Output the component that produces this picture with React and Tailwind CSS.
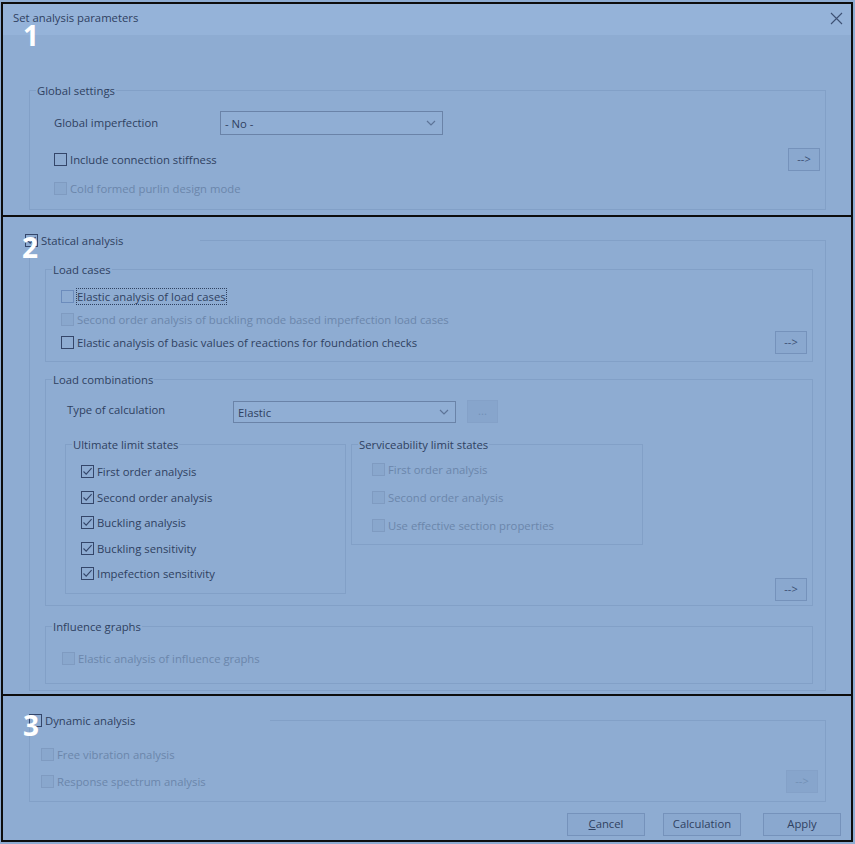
import React from 'react';

const T = 'text-[#2f4161]';
const D = 'text-[#6b86ab]';

function Box({ checked, disabled, hover }) {
  const cls = disabled
    ? 'border-[#7f9bc1] bg-[#89a7cd]'
    : hover
    ? 'border-[#6c8cbc]'
    : 'border-[#34466a]';
  return (
    <span className={`flex h-[13px] w-[13px] shrink-0 items-center justify-center border ${cls}`}>
      {checked && (
        <svg width="11" height="11" viewBox="0 0 11 11">
          <path d="M1.5 5.5 L4.2 8.2 L9.6 2.2" stroke="#34466a" strokeWidth="1.1" fill="none" />
        </svg>
      )}
    </span>
  );
}

function Check({ label, checked, disabled, focus, hover, className = '' }) {
  return (
    <div className={`flex items-center gap-[3px] ${className}`}>
      <Box checked={checked} disabled={disabled} hover={hover} />
      <span
        className={`leading-[15px] ${disabled ? D : T} ${
          focus ? 'outline outline-1 outline-dotted outline-[#2f4161]' : ''
        }`}
      >
        {label}
      </span>
    </div>
  );
}

function Group({ title, className = '', inner = '', children }) {
  return (
    <fieldset className={`border border-[#82a0c7] ${className}`}>
      <legend className={`ml-[6px] px-[1px] leading-[15px] ${T}`}>{title}</legend>
      <div className={inner}>{children}</div>
    </fieldset>
  );
}

function Arrow({ disabled }) {
  return (
    <div
      className={`flex h-[23px] w-[32px] shrink-0 items-center justify-center border text-[11px] ${
        disabled
          ? 'border-[#84a1c8] bg-[#87a5cc] text-[#7290b6]'
          : 'border-[#7592bb] bg-[#8aa8cf] text-[#3b4f74]'
      }`}
    >
      {'-->'}
    </div>
  );
}

function Select({ value, w, h }) {
  return (
    <div
      className={`flex ${w} ${h} items-center justify-between border border-[#6a83a8] bg-[#90aed4] pl-[4px] pr-[6px]`}
    >
      <span className={`${T} leading-[15px]`}>{value}</span>
      <svg width="10" height="6" viewBox="0 0 10 6">
        <path d="M1 1 L5 5 L9 1" stroke="#5d7498" strokeWidth="1.2" fill="none" />
      </svg>
    </div>
  );
}

function Num({ n, className }) {
  return (
    <span
      className={`absolute text-[28px] font-bold leading-none text-white ${className}`}
      style={{ fontFamily: '"Open Sans", sans-serif' }}
    >
      {n}
    </span>
  );
}

function FootBtn({ children }) {
  return (
    <div className={`flex h-[23px] w-[78px] items-center justify-center border border-[#7592bb] bg-[#8aa8cf] ${T}`}>
      {children}
    </div>
  );
}

export default function App() {
  return (
    <div
      className="h-[844px] w-[855px] bg-[#8eacd2] pt-[2px] pl-[1px] text-[11.3px]"
      style={{ fontFamily: '"Open Sans", "Noto Sans", sans-serif' }}
    >
      {/* section 1 */}
      <div className="relative flex h-[215px] w-[852px] flex-col border-2 border-[#0d0d0d]">
        <div className="flex h-[31px] shrink-0 items-start justify-between bg-[#95b3d9] pl-[10px] pr-[8px] pt-[6px]">
          <span className={`leading-[15px] ${T}`}>Set analysis parameters</span>
          <svg width="13" height="13" viewBox="0 0 13 13" className="mt-[2px]">
            <path d="M1 1 L12 12 M12 1 L1 12" stroke="#3d5073" strokeWidth="1.1" />
          </svg>
        </div>
        <Group
          title="Global settings"
          className="ml-[26px] mt-[48px] w-[797px]"
          inner="pb-[13px] pl-[24px] pr-[5px] pt-[13px]"
        >
          <div className="flex h-[24px] items-center">
            <span className={`w-[166px] ${T}`}>Global imperfection</span>
            <Select value="- No -" w="w-[223px]" h="h-[24px]" />
          </div>
          <div className="mt-[13px] flex h-[23px] items-center justify-between">
            <Check label="Include connection stiffness" />
            <Arrow />
          </div>
          <Check label="Cold formed purlin design mode" disabled className="mt-[10px] h-[15px]" />
        </Group>
        <Num n="1" className="left-[20px] top-[17px]" />
      </div>

      {/* section 2 */}
      <div className="relative flex h-[479px] w-[852px] flex-col border-x-2 border-b-2 border-[#0d0d0d]">
        <fieldset className="ml-[26px] mt-[16px] w-[797px] border border-[#82a0c7]">
          <legend className="-ml-[5px] flex h-[15px] w-[175px] items-center gap-[3px]">
            <Box checked />
            <span className={`leading-[15px] ${T}`}>Statical analysis</span>
          </legend>
          <div className="pb-[6px] pl-[15px]">
            <Group
              title="Load cases"
              className="mt-[14px] w-[768px]"
              inner="pb-[7px] pl-[15px] pr-[5px] pt-[8px]"
            >
              <div className="flex h-[23px] items-center">
                <Check label="Elastic analysis of load cases" focus hover />
              </div>
              <div className="flex h-[23px] items-center">
                <Check label="Second order analysis of buckling mode based imperfection load cases" disabled />
              </div>
              <div className="flex h-[23px] items-center justify-between">
                <Check label="Elastic analysis of basic values of reactions for foundation checks" />
                <Arrow />
              </div>
            </Group>

            <Group
              title="Load combinations"
              className="mt-[10px] w-[768px]"
              inner="pb-[11px] pl-[19px] pr-[5px] pt-[13px]"
            >
              <div className="flex h-[23px] items-start">
                <span className={`mt-[2px] w-[168px] pl-[2px] leading-[15px] ${T}`}>Type of calculation</span>
                <div className="mt-[1px]">
                  <Select value="Elastic" w="w-[223px]" h="h-[22px]" />
                </div>
                <div className="ml-[11px] flex h-[23px] w-[31px] items-center justify-center border border-[#84a1c8] bg-[#87a5cc] text-[#7290b6]">
                  ...
                </div>
              </div>
              <div className="mt-[14px] flex items-start">
                <Group title="Ultimate limit states" className="w-[281px]" inner="pb-[6px] pl-[15px] pt-[7px]">
                  <Check label="First order analysis" checked className="h-[25.5px]" />
                  <Check label="Second order analysis" checked className="h-[25.5px]" />
                  <Check label="Buckling analysis" checked className="h-[25.5px]" />
                  <Check label="Buckling sensitivity" checked className="h-[25.5px]" />
                  <Check label="Impefection sensitivity" checked className="h-[25.5px]" />
                </Group>
                <Group
                  title="Serviceability limit states"
                  className="ml-[5px] w-[292px]"
                  inner="pb-[5px] pl-[20px] pt-[3px]"
                >
                  <Check label="First order analysis" disabled className="h-[28px]" />
                  <Check label="Second order analysis" disabled className="h-[28px]" />
                  <Check label="Use effective section properties" disabled className="h-[28px]" />
                </Group>
                <div className="-mb-[7px] ml-auto self-end">
                  <Arrow />
                </div>
              </div>
            </Group>

            <Group
              title="Influence graphs"
              className="mt-[13px] w-[768px]"
              inner="pb-[13px] pl-[16px] pt-[13px]"
            >
              <Check label="Elastic analysis of influence graphs" disabled className="h-[23px]" />
            </Group>
          </div>
        </fieldset>
        <Num n="2" className="left-[19px] top-[16px]" />
      </div>

      {/* section 3 */}
      <div className="relative flex h-[146px] w-[852px] flex-col border-x-2 border-b-2 border-[#0d0d0d]">
        <fieldset className="ml-[26px] mt-[17px] w-[797px] border border-[#82a0c7]">
          <legend className="-ml-[1px] flex h-[15px] w-[241px] items-center gap-[3px]">
            <Box />
            <span className={`leading-[15px] ${T}`}>Dynamic analysis</span>
          </legend>
          <div className="pb-[6px] pl-[11px] pr-[7px] pt-[13px]">
            <Check label="Free vibration analysis" disabled className="h-[27px]" />
            <div className="flex h-[27px] items-center justify-between">
              <Check label="Response spectrum analysis" disabled />
              <Arrow disabled />
            </div>
          </div>
        </fieldset>
        <div className="mt-[11px] flex justify-end pr-[10px]">
          <FootBtn>
            <span>
              <span className="underline">C</span>ancel
            </span>
          </FootBtn>
          <div className="ml-[18px]">
            <FootBtn>Calculation</FootBtn>
          </div>
          <div className="ml-[22px]">
            <FootBtn>Apply</FootBtn>
          </div>
        </div>
        <Num n="3" className="left-[20px] top-[15px]" />
      </div>
    </div>
  );
}
